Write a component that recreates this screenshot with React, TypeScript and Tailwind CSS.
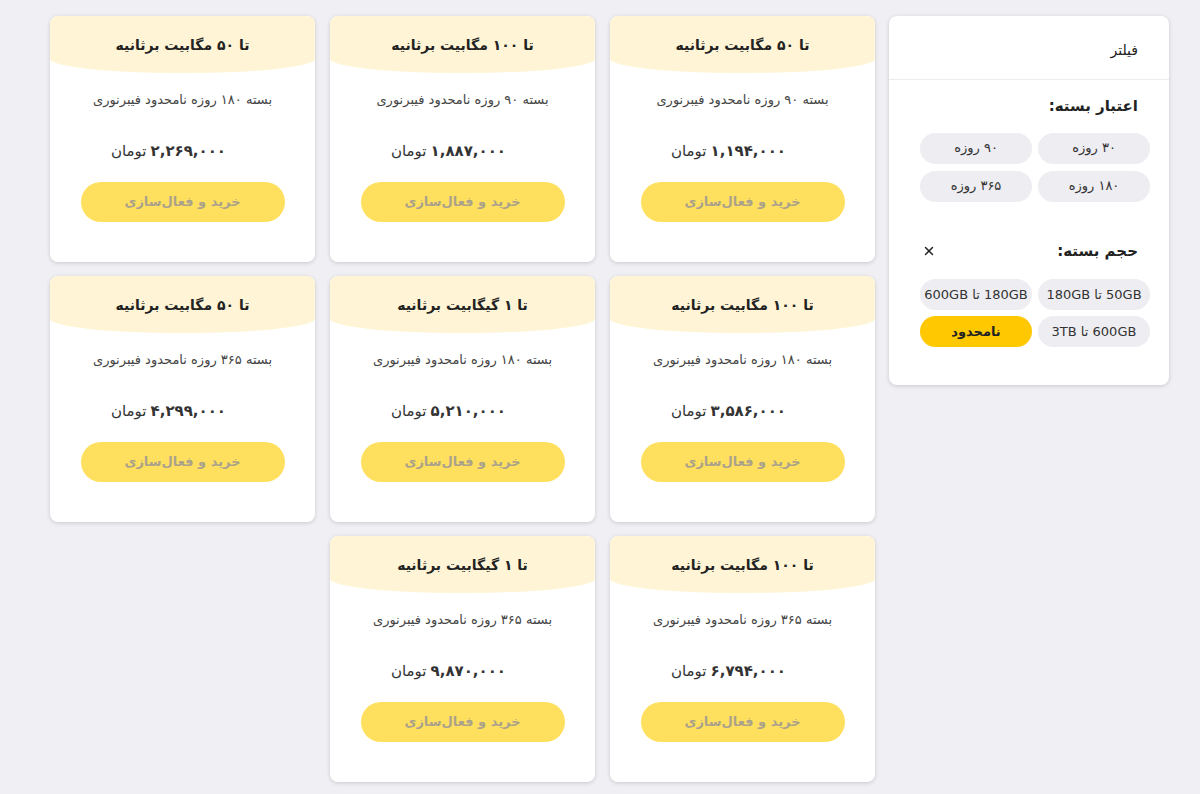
import { X } from "lucide-react";

type Plan = {
  speed: string;
  days: string;
  price: string;
};

// listed in reading order (right to left)
const plans: Plan[] = [
  { speed: "تا ۵۰ مگابیت برثانیه", days: "۹۰", price: "۱,۱۹۴,۰۰۰" },
  { speed: "تا ۱۰۰ مگابیت برثانیه", days: "۹۰", price: "۱,۸۸۷,۰۰۰" },
  { speed: "تا ۵۰ مگابیت برثانیه", days: "۱۸۰", price: "۲,۲۶۹,۰۰۰" },
  { speed: "تا ۱۰۰ مگابیت برثانیه", days: "۱۸۰", price: "۳,۵۸۶,۰۰۰" },
  { speed: "تا ۱ گیگابیت برثانیه", days: "۱۸۰", price: "۵,۲۱۰,۰۰۰" },
  { speed: "تا ۵۰ مگابیت برثانیه", days: "۳۶۵", price: "۴,۲۹۹,۰۰۰" },
  { speed: "تا ۱۰۰ مگابیت برثانیه", days: "۳۶۵", price: "۶,۷۹۴,۰۰۰" },
  { speed: "تا ۱ گیگابیت برثانیه", days: "۳۶۵", price: "۹,۸۷۰,۰۰۰" },
];

const durations = ["۳۰ روزه", "۹۰ روزه", "۱۸۰ روزه", "۳۶۵ روزه"];
const sizes = ["50GB تا 180GB", "180GB تا 600GB", "600GB تا 3TB", "نامحدود"];

function PlanCard({ plan }: { plan: Plan }) {
  return (
    <div className="flex h-[246px] flex-col overflow-hidden rounded-lg bg-white shadow-[0_1px_4px_rgba(0,0,0,0.16)]">
      <div className="flex h-[57px] items-start justify-center rounded-br-[50%_14px] rounded-bl-[50%_14px] bg-[#fff5d6] pt-[19px]">
        <h3 className="text-[14px] font-bold text-[#222]">{plan.speed}</h3>
      </div>
      <p className="mt-[17px] text-center text-[13px] text-[#444]">
        بسته {plan.days} روزه نامحدود فیبرنوری
      </p>
      <div className="mt-[30px] flex items-center justify-center gap-1 pr-[28px] text-[15px] text-[#333]">
        <span className="font-bold">{plan.price}</span>
        <span>تومان</span>
      </div>
      <button className="mx-auto mt-[20px] h-[40px] w-[204px] rounded-full bg-[#ffe05e] text-[13px] font-bold text-[#aaa28a]">
        خرید و فعال‌سازی
      </button>
    </div>
  );
}

function Chip({ label, active }: { label: string; active?: boolean }) {
  return (
    <button
      className={
        active
          ? "h-[31px] w-[112px] rounded-full bg-[#ffc800] text-[13px] font-bold text-[#222]"
          : "h-[31px] w-[112px] rounded-full bg-[#ededf2] text-[13px] text-[#333]"
      }
    >
      {label}
    </button>
  );
}

export default function App() {
  return (
    <div
      dir="rtl"
      className="min-h-[794px] bg-[#efeff4] pt-4 pr-[31px] font-['DejaVu_Sans',sans-serif]"
    >
      <div className="flex items-start gap-[14px]">
        <aside className="h-[369px] w-[280px] shrink-0 rounded-lg bg-white shadow-[0_1px_4px_rgba(0,0,0,0.16)]">
          <div className="flex h-[64px] items-center border-b border-[#ececf0] pt-[5px] pr-[31px]">
            <h2 className="text-[14px] text-[#222]">فیلتر</h2>
          </div>
          <div className="pt-[15px] pr-[31px] pl-[19px]">
            <h3 className="text-[15px] font-bold text-[#222]">اعتبار بسته:</h3>
          </div>
          <div className="mt-[15px] mr-[19px] grid w-[230px] grid-cols-2 gap-x-[6px] gap-y-[7px]">
            {durations.map((d) => (
              <Chip key={d} label={d} />
            ))}
          </div>
          <div className="mt-[38px] flex items-center justify-between pr-[31px] pl-[33px]">
            <h3 className="text-[15px] font-bold text-[#222]">حجم بسته:</h3>
            <X className="h-[14px] w-[14px] text-[#222]" strokeWidth={2.5} />
          </div>
          <div className="mt-[17px] mr-[19px] grid w-[230px] grid-cols-2 gap-x-[6px] gap-y-[6px]">
            {sizes.map((s, i) => (
              <Chip key={s} label={s} active={i === 3} />
            ))}
          </div>
        </aside>
        <div className="grid w-[825px] grid-cols-3 gap-x-[15px] gap-y-[14px]">
          {plans.map((p, i) => (
            <PlanCard key={i} plan={p} />
          ))}
        </div>
      </div>
    </div>
  );
}
